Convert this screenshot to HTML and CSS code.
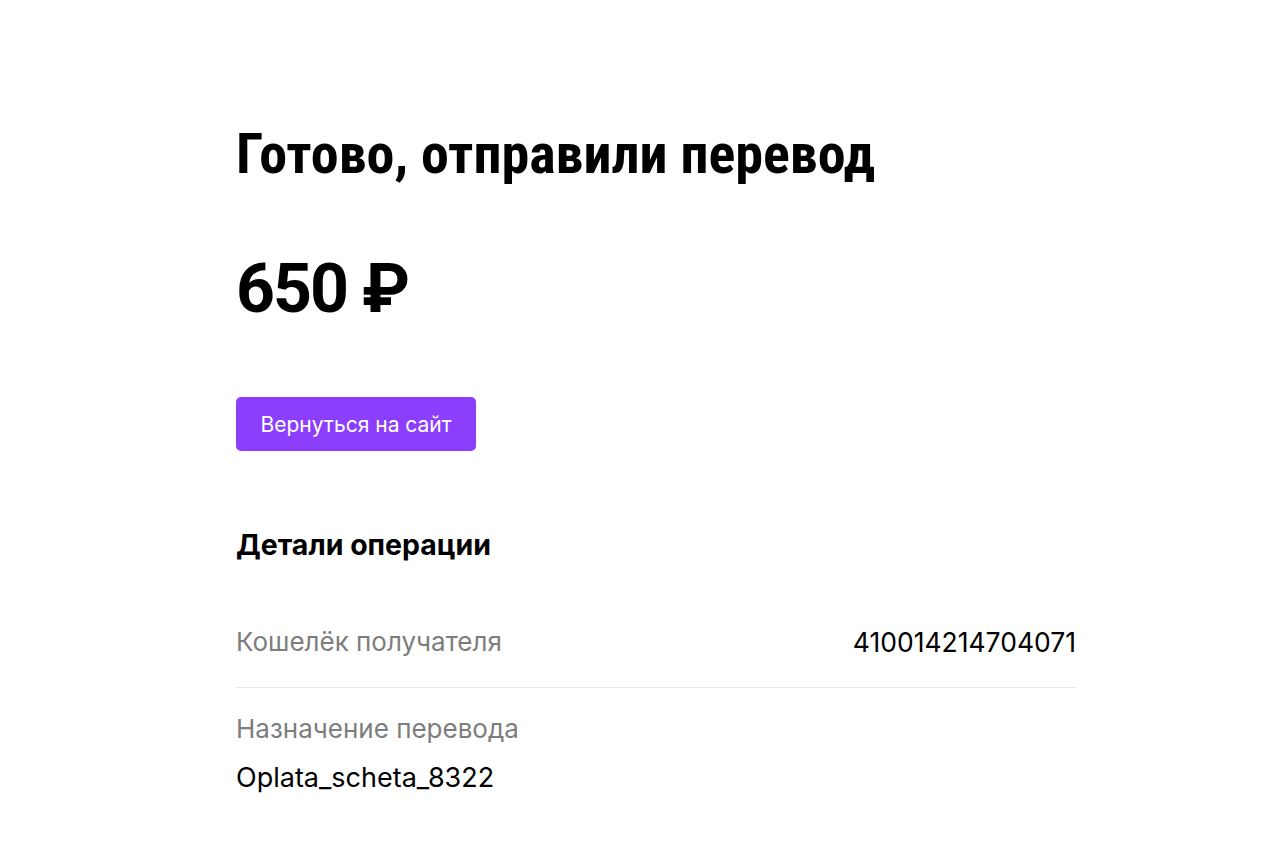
FILE: index.html
```html
<!DOCTYPE html>
<html lang="ru">
<head>
<meta charset="utf-8">
<link rel="stylesheet" href="styles.css">
</head>
<body>
<main class="page">
  <h1 class="title">Готово, отправили перевод</h1>
  <div class="amount">650 ₽</div>
  <a class="btn" href="#">Вернуться на сайт</a>
  <h2 class="details-title">Детали операции</h2>
  <div class="row row-inline">
    <span class="label">Кошелёк получателя</span>
    <span class="value">410014214704071</span>
  </div>
  <div class="row row-stack">
    <span class="label">Назначение перевода</span>
    <span class="value value-lg">Oplata_scheta_8322</span>
  </div>
</main>
</body>
</html>
```
FILE: styles.css
```css
html, body {
  margin: 0;
  padding: 0;
  background: #fff;
}
body {
  font-family: "Inter", "Noto Sans", sans-serif;
  color: #000;
}
.page {
  width: 840px;
  margin-left: 236px;
  padding-top: 118px;
  display: flex;
  flex-direction: column;
  align-items: flex-start;
}
.title {
  margin: 0;
  font-family: "Roboto Condensed", "Liberation Sans", Arial, sans-serif;
  font-weight: 700;
  font-size: 56px;
  line-height: 72px;
}
.amount {
  margin-top: 59px;
  font-family: "Roboto", "Inter", sans-serif;
  font-weight: 700;
  font-size: 68px;
  line-height: 80px;
  letter-spacing: -2px;
}
.btn {
  margin-top: 68px;
  display: inline-flex;
  align-items: center;
  justify-content: center;
  width: 240px;
  height: 54px;
  background: #8b3ffd;
  color: #fff;
  border-radius: 5px;
  text-decoration: none;
  font-size: 21px;
}
.details-title {
  margin: 74px 0 0;
  font-weight: 700;
  font-size: 28.5px;
  line-height: 40px;
}
.row {
  width: 100%;
  font-size: 26px;
  line-height: 30px;
}
.row-inline {
  margin-top: 62px;
  display: flex;
  justify-content: space-between;
  padding-bottom: 30px;
  border-bottom: 1px solid #e6e6e6;
}
.row-stack {
  margin-top: 26px;
  display: flex;
  flex-direction: column;
  gap: 19px;
}
.label {
  color: #7d7d7d;
}
.value {
  color: #000;
}
.row-inline .value {
  font-size: 26.5px;
}
.value-lg {
  font-size: 27px;
}
```
